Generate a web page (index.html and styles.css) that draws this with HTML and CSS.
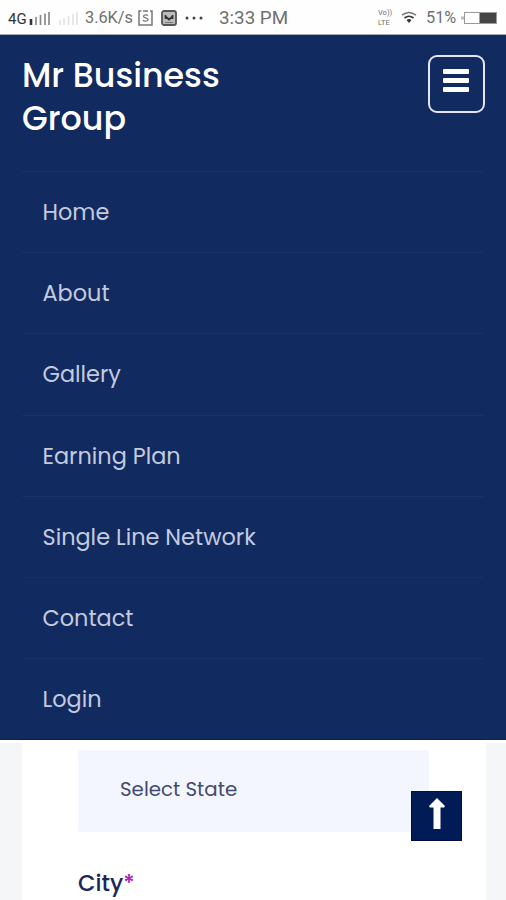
FILE: index.html
```html
<!DOCTYPE html>
<html lang="en">
  <head>
    <meta charset="UTF-8" />
    <meta name="viewport" content="width=device-width, initial-scale=1.0" />
    <title>Mr Business Group</title>
    <link rel="stylesheet" href="styles.css">
  </head>
  <body>
    <div class="status-bar">
      <span class="network">4G</span>
      <svg class="signal" width="50" height="16" viewBox="0 0 50 16">
        <path d="M2 9v6" stroke="#333" stroke-width="2.6" />
        <path d="M7 7v8M11.500 5v10M16 3.500v11.500M20 2v13" stroke="#8a8a8a" stroke-width="1.700" />
        <path d="M31 10v5M35 8v7M39.500 6v9M44 4v11M48 2v13" stroke="#e0e0e0" stroke-width="1.500" />
      </svg>
      <span class="speed">3.6K/s</span>
      <svg class="app-icon" width="15" height="16" viewBox="0 0 15 16" fill="none" stroke="#777">
        <path d="M3.500 1H1v14h13V1h-2M5 1h5" stroke-width="1.500" />
        <path d="M10 5.500c-1-1-4.500-1-4.500.9 0 2 4.500 1 4.500 3.100 0 2-4 2-5 .6" stroke-width="1.300" />
      </svg>
      <svg class="app-icon mail" width="16" height="16" viewBox="0 0 16 16">
        <rect x="1" y="1" width="14" height="14" rx="2" fill="#bbb" stroke="#555" stroke-width="1.800" />
        <path d="M4.500 5v4M11.500 5v4M4 6l4 3.500L12 6" fill="none" stroke="#333" stroke-width="1.700" />
        <path d="M4 12.500h8" stroke="#777" />
      </svg>
      <svg class="dots" width="18" height="4" viewBox="0 0 18 4" fill="#444">
        <circle cx="2" cy="2" r="1.500" /><circle cx="9" cy="2" r="1.500" /><circle cx="16" cy="2" r="1.500" />
      </svg>
      <span class="time">3:33 PM</span>
      <span class="volte"><span>Vo))</span><span>LTE</span></span>
      <svg class="wifi" width="16" height="13" viewBox="0 0 16 13" fill="none" stroke="#777">
        <path d="M1 4.200Q8-1.200 15 4.200" stroke-width="1.500" />
        <path d="M3.500 7Q8 3.500 12.500 7" stroke="#333" stroke-width="1.600" />
        <path d="M5.500 9q2.500-2 5 0L8 12z" fill="#333" stroke="none" />
      </svg>
      <span class="percent">51%</span>
      <svg class="battery" width="37" height="14" viewBox="0 0 37 14">
        <path d="M0 5.500h3v3H0z" fill="#bbb" />
        <rect x="3.500" y="1.500" width="32" height="11" fill="#fff" stroke="#999" />
        <path d="M18.500 2H35v10H18.500z" fill="#444" />
      </svg>
    </div>

    <header class="header">
      <div class="header-top">
        <a class="brand">Mr Business<br />Group</a>
        <button class="menu-toggle" aria-label="Toggle menu">
          <svg width="26" height="24" viewBox="0 0 26 24" fill="#fff">
            <rect y="0" width="26" height="5" rx="1" />
            <rect y="9" width="26" height="5" rx="1" />
            <rect y="18" width="26" height="5" rx="1" />
          </svg>
        </button>
      </div>
      <nav class="menu">
        <a class="menu-item">Home</a>
        <a class="menu-item">About</a>
        <a class="menu-item">Gallery</a>
        <a class="menu-item">Earning Plan</a>
        <a class="menu-item">Single Line Network</a>
        <a class="menu-item">Contact</a>
        <a class="menu-item">Login</a>
      </nav>
    </header>

    <main class="page">
      <form class="form-card">
        <div class="select-field">Select State</div>
        <label class="field-label">City<span class="required">*</span></label>
      </form>
    </main>

    <a class="scroll-top" aria-label="Back to top">
      <svg width="16" height="32" viewBox="0 0 16 32" fill="#fff">
        <path d="M8 0l7.500 7.500q.8 2-.8 2H11.500V31h-7V9.500H1.300Q-.3 9.500.5 7.500z" />
      </svg>
    </a>
  </body>
</html>
```

FILE: styles.css
```css
* {
  box-sizing: border-box;
}

body {
  margin: 0;
  height: 900px;
  overflow: hidden;
  display: flex;
  flex-direction: column;
  font-family: Poppins, Inter, sans-serif;
  background-color: #f4f6f7;
}

.status-bar {
  display: flex;
  align-items: center;
  flex: none;
  height: 35px;
  padding: 1px 0 0 8px;
  background-color: #fefefe;
  border-bottom: 1px solid #a5adbd;
  font-family: Roboto, sans-serif;
  font-size: 16.3px;
  color: #707070;
  white-space: nowrap;
}

.status-bar svg {
  flex: none;
}

.network {
  width: 21px;
  font-size: 15px;
  color: #333;
  padding-top: 2px;
}

.speed {
  width: 47px;
  margin-left: 6px;
}

.app-icon {
  margin-left: 6px;
}

.mail {
  margin-left: 8px;
}

.dots {
  margin-left: 8px;
}

.time {
  width: 69px;
  margin-left: 16px;
  font-size: 18.8px;
}

.volte {
  display: flex;
  flex-direction: column;
  width: 16px;
  margin-left: 90px;
  font-size: 7.5px;
  line-height: 10px;
}

.wifi {
  margin-left: 7px;
}

.percent {
  width: 31px;
  margin-left: 9px;
  font-size: 16.3px;
}

.battery {
  margin-left: 4px;
}

.header {
  flex: none;
  height: 705px;
  padding: 0 22px;
  background-color: #112b60;
  border-bottom: 1px solid #0a1f52;
}

.header-top {
  display: flex;
  justify-content: space-between;
  height: 136px;
  padding-top: 19px;
}

.brand {
  color: #fff;
  font-size: 33.3px;
  font-weight: 500;
  line-height: 43px;
}

.menu-toggle {
  display: flex;
  justify-content: center;
  width: 57px;
  height: 58px;
  margin-top: 1px;
  margin-right: -1px;
  padding: 12px 2px 0 0;
  background: none;
  border: 2px solid #e4e4f2;
  border-radius: 9px;
}

.menu {
  display: flex;
  flex-direction: column;
}

.menu-item {
  height: 81.2px;
  padding-left: 20.5px;
  border-top: 1px solid #183263;
  color: #c4cade;
  font-size: 22.4px;
  line-height: 80.6px;
}

.page {
  flex: 1;
  padding: 0 20px 0 22px;
  border-top: 3px solid #fff;
}

.form-card {
  height: 100%;
  padding: 7px 57px 0 56px;
  background-color: #fff;
}

.select-field {
  height: 82px;
  padding-left: 42px;
  background-color: #f3f6ff;
  border-radius: 2px;
  color: #44496e;
  font-size: 19.8px;
  line-height: 79px;
}

.field-label {
  display: block;
  margin-top: 35px;
  color: #1a2857;
  font-size: 22.7px;
  font-weight: 500;
  line-height: 32px;
}

.required {
  color: #a020b8;
}

/* floats over the form */
.scroll-top {
  position: fixed;
  top: 791px;
  left: 411px;
  display: flex;
  justify-content: center;
  width: 51px;
  height: 50px;
  padding-top: 6px;
  background-color: #001b55;
  border: 1px solid #001044;
}
```
